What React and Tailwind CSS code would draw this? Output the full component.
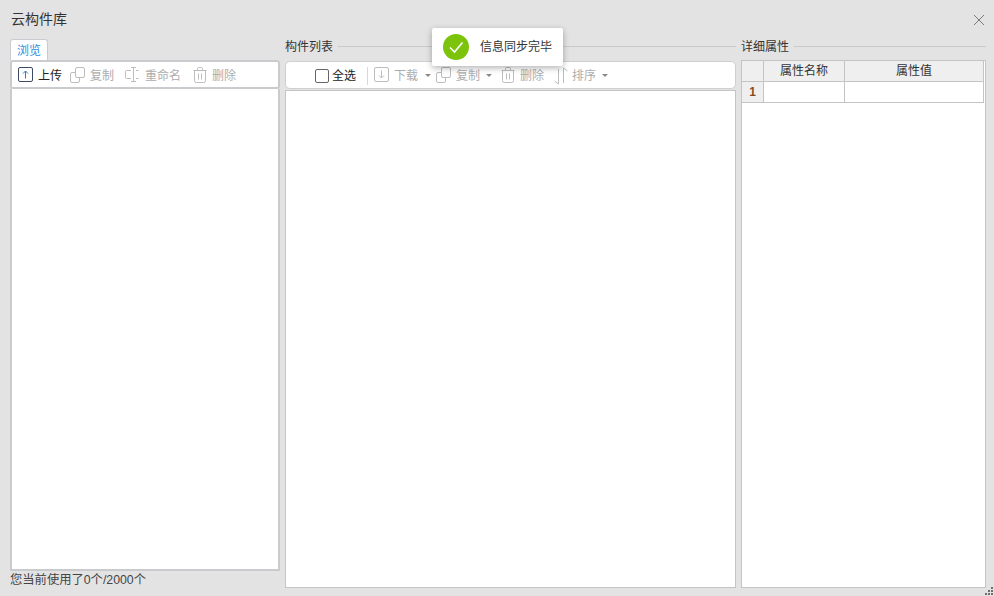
import React from 'react';

const FONT = '"Liberation Sans", "Noto Sans CJK SC", sans-serif';

// Toolbar icons, drawn on a 16px box
const UploadIcon = () => (
  <svg width="16" height="16" viewBox="0 0 16 16" fill="none" className="shrink-0 -translate-y-px">
    <rect x="0.5" y="0.5" width="14" height="14" rx="1.5" stroke="#3d4a63" />
    <path d="M7.5 11.5V4M5 6.5L7.5 4L10 6.5" stroke="#1f7fd6" />
  </svg>
);

const DownloadIcon = () => (
  <svg width="16" height="16" viewBox="0 0 16 16" fill="none" className="shrink-0 -translate-y-px">
    <rect x="0.5" y="0.5" width="14" height="14" rx="1.5" stroke="#bdbdbd" />
    <path d="M7.5 3.5V11M5 8.5L7.5 11L10 8.5" stroke="#bdbdbd" />
  </svg>
);

const CopyIcon = () => (
  <svg width="16" height="16" viewBox="0 0 16 16" fill="none" className="shrink-0 -translate-y-px">
    <rect x="0.5" y="5.5" width="9" height="10" rx="1.5" fill="#fff" stroke="#bdbdbd" />
    <rect x="5.5" y="0.5" width="9" height="10" rx="1.5" fill="#fff" stroke="#bdbdbd" />
  </svg>
);

const RenameIcon = () => (
  <svg width="16" height="16" viewBox="0 0 16 16" fill="none" className="shrink-0 -translate-y-px">
    <path d="M6 3.5H1.5a1 1 0 0 0-1 1v6a1 1 0 0 0 1 1H6M11 3.5h2.5M11 11.5h2.5" stroke="#bdbdbd" />
    <path d="M8.5 0.5v14M6 0.5h5M6 14.5h5" stroke="#bdbdbd" />
  </svg>
);

const TrashIcon = () => (
  <svg width="14" height="16" viewBox="0 0 14 16" fill="none" className="shrink-0 mr-px -translate-y-px">
    <path d="M0.5 3.5h13M4.5 3.5V1.5a1 1 0 0 1 1-1h3a1 1 0 0 1 1 1v2" stroke="#bdbdbd" />
    <path d="M1.5 3.5v10a2 2 0 0 0 2 2h7a2 2 0 0 0 2-2v-10" stroke="#bdbdbd" />
    <path d="M5.5 6.5v6M8.5 6.5v6" stroke="#bdbdbd" />
  </svg>
);

const SortIcon = () => (
  <svg width="14" height="18" viewBox="0 0 14 18" fill="none" className="shrink-0">
    <path d="M4.5 2v15L0.5 14" stroke="#bdbdbd" />
    <path d="M9.5 16V1l4 3" stroke="#bdbdbd" />
  </svg>
);

const Caret = () => <span className="w-0 h-0 border-x-[3px] border-x-transparent border-t-[3px] border-t-[#8a8a8a] shrink-0" />;

const ToolItem = ({ icon, label, active, className = '' }) => (
  <div className={`flex items-center ${className}`}>
    {icon}
    <span className={`ml-[4px] ${active ? 'text-[#222]' : 'text-[#adadad]'}`}>{label}</span>
  </div>
);

const SectionTitle = ({ children }) => (
  <div className="flex items-center h-[14px] text-[12px] text-[#333]">
    <span className="pt-[2px]">{children}</span>
    <div className="flex-1 h-px bg-[#c9c9c9] ml-[5px]" />
  </div>
);

const App = () => (
  <div className="relative w-[994px] h-[596px] overflow-hidden bg-[#e3e3e3] text-[12px]" style={{ fontFamily: FONT }}>
    <div className="flex items-center justify-between h-[39px] pl-[11px] pr-[9px]">
      <span className="text-[14px] text-[#333]">云构件库</span>
      <svg width="12" height="12" viewBox="0 0 12 12" fill="none">
        <path d="M1 1l10 10M11 1L1 11" stroke="#7a7a7a" />
      </svg>
    </div>

    <div className="flex pl-[10px] h-[550px]">
      {/* left column */}
      <div className="flex flex-col w-[270px] mr-[5px]">
        <div className="flex items-center justify-center shrink-0 w-[38px] h-[21px] pt-px bg-white border border-b-0 border-[#c8ccd0] rounded-t-[3px] text-[#2b8fe0]">
          浏览
        </div>
        <div className="flex items-center shrink-0 h-[29px] pt-[2px] bg-white border-2 border-[#c9cbcf] rounded-[3px] pl-[6px]">
          <ToolItem icon={<UploadIcon />} label="上传" active />
          <ToolItem icon={<CopyIcon />} label="复制" className="ml-[8px]" />
          <ToolItem icon={<RenameIcon />} label="重命名" className="ml-[11px]" />
          <ToolItem icon={<TrashIcon />} label="删除" className="ml-[12px]" />
        </div>
        <div className="h-[482px] shrink-0 bg-white border-2 border-t-0 border-[#c9cbcf]" />
        <div className="h-[18px] shrink-0 pt-px leading-[16px] text-[12.3px] text-[#444]">您当前使用了0个/2000个</div>
      </div>

      {/* middle column */}
      <div className="flex flex-col w-[451px] mr-[5px]">
        <div className="h-[21px] shrink-0">
          <SectionTitle>构件列表</SectionTitle>
        </div>
        <div className="flex items-center shrink-0 h-[28px] pt-px mt-[1px] bg-white border border-[#cfcfcf] rounded-[5px] pl-[29px]">
          <span className="w-[14px] h-[14px] border border-[#666] rounded-[2px] shrink-0" />
          <span className="ml-[3px] text-[#222]">全选</span>
          <div className="w-px h-[18px] bg-[#d8d8d8] ml-[11px]" />
          <ToolItem icon={<DownloadIcon />} label="下载" className="ml-[6px]" />
          <span className="ml-[7px] flex"><Caret /></span>
          <ToolItem icon={<CopyIcon />} label="复制" className="ml-[5px]" />
          <span className="ml-[6px] flex"><Caret /></span>
          <ToolItem icon={<TrashIcon />} label="删除" className="ml-[9px]" />
          <ToolItem icon={<SortIcon />} label="排序" className="ml-[10px]" />
          <span className="ml-[6px] flex"><Caret /></span>
        </div>
        <div className="flex-1 mt-[1px] mb-[1px] bg-white border border-[#c4c4c4]" />
      </div>

      {/* right column */}
      <div className="flex flex-col w-[245px]">
        <div className="h-[21px] shrink-0">
          <SectionTitle>详细属性</SectionTitle>
        </div>
        <div className="flex-1 mb-[1px] bg-white border border-[#c4c4c4]">
          <div className="flex w-[242px] h-[21px] bg-[#efefef] border-b border-[#c4c4c4] text-[#333]">
            <div className="w-[22px] border-r border-[#c4c4c4]" />
            <div className="w-[81px] border-r border-[#c4c4c4] flex items-center justify-center">属性名称</div>
            <div className="w-[139px] border-r border-[#c4c4c4] flex items-center justify-center">属性值</div>
          </div>
          <div className="flex h-[21px]">
            <div className="w-[22px] bg-[#efefef] border-r border-b border-[#c4c4c4] flex items-center justify-center text-[#8a4b1f] font-bold">1</div>
            <div className="w-[81px] border-r border-b border-[#c4c4c4]" />
            <div className="w-[139px] border-r border-b border-[#c4c4c4]" />
          </div>
        </div>
      </div>
    </div>

    {/* resize grip */}
    <svg width="9" height="9" viewBox="0 0 9 9" className="absolute right-0 bottom-0" fill="#6f6f6f">
      <rect x="6" y="0" width="2" height="2" />
      <rect x="3" y="3" width="2" height="2" />
      <rect x="6" y="3" width="2" height="2" />
      <rect x="0" y="6" width="2" height="2" />
      <rect x="3" y="6" width="2" height="2" />
      <rect x="6" y="6" width="2" height="2" />
    </svg>

    {/* toast */}
    <div className="absolute left-[432px] top-[28px] flex items-center w-[131px] h-[38px] bg-white shadow-[0_2px_6px_rgba(0,0,0,0.3)] rounded-[2px] pl-[11px]">
      <svg width="26" height="26" viewBox="0 0 26 26" fill="none" className="shrink-0">
        <circle cx="13" cy="13" r="13" fill="#7cc30b" />
        <path d="M7 13.5l4.5 4.5L19.5 8.5" stroke="#fff" strokeWidth="1.6" />
      </svg>
      <span className="ml-[11px] text-[#333] whitespace-nowrap">信息同步完毕</span>
    </div>
  </div>
);

export default App;
